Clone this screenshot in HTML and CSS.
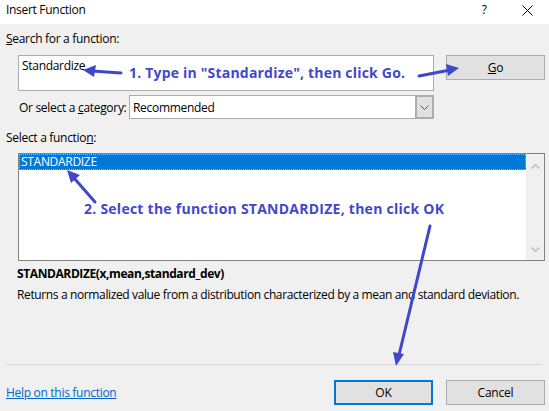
FILE: index.html
```html
<!DOCTYPE html>
<html>
<head>
<meta charset="utf-8">
<link rel="stylesheet" href="styles.css">
</head>
<body>
<div class="dialog">
  <div class="titlebar">
    <span class="title">Insert Function</span>
    <span class="help-q">?</span>
    <svg class="close-x" width="11" height="11" viewBox="0 0 11 11"><path d="M0.5 0.5 L10.5 10.5 M10.5 0.5 L0.5 10.5" stroke="#000" stroke-width="1"/></svg>
  </div>
  <div class="body">
    <div class="label lbl-search"><u>S</u>earch for a function:</div>
    <div class="search-row">
      <div class="search-box">Standardize</div>
      <div class="btn btn-go"><u>G</u>o</div>
    </div>
    <div class="cat-row">
      <span class="cat-label">Or select a <u>c</u>ategory:</span>
      <div class="select">
        <span class="select-text">Recommended</span>
        <span class="select-btn"><svg width="9" height="5" viewBox="0 0 9 5"><path d="M0.5 0.5 L4.5 4.5 L8.5 0.5" fill="none" stroke="#555" stroke-width="1"/></svg></span>
      </div>
    </div>
    <div class="label lbl-select">Select a functio<u>n</u>:</div>
    <div class="listbox">
      <div class="list-items">
        <div class="item selected">STANDARDIZE</div>
      </div>
      <div class="scrollbar">
        <svg width="9" height="5" viewBox="0 0 9 5"><path d="M0.5 4.5 L4.5 0.8 L8.5 4.5" fill="none" stroke="#c2c2c2" stroke-width="1.6"/></svg>
        <svg width="9" height="5" viewBox="0 0 9 5"><path d="M0.5 0.5 L4.5 4.2 L8.5 0.5" fill="none" stroke="#c2c2c2" stroke-width="1.6"/></svg>
      </div>
    </div>
    <div class="signature">STANDARDIZE(x,mean,standard_dev)</div>
    <div class="desc">Returns a normalized value from a distribution characterized by a mean and standard deviation.</div>
    <div class="footer">
      <a class="help-link">Help on this function</a>
      <div class="buttons">
        <div class="btn btn-ok">OK</div>
        <div class="btn btn-cancel">Cancel</div>
      </div>
    </div>
  </div>

  <span class="note note1">1. Type in "Standardize", then click Go.</span>
  <span class="note note2">2. Select the function STANDARDIZE, then click OK</span>
  <svg class="arrows" width="549" height="411" viewBox="0 0 549 411">
    <g stroke="#3f48cc" stroke-width="3" stroke-linecap="round" fill="none">
      <line x1="121" y1="73" x2="92" y2="71"/>
      <line x1="419" y1="76" x2="450" y2="70"/>
      <line x1="95" y1="202" x2="74" y2="178"/>
      <line x1="430" y1="226" x2="399" y2="355"/>
    </g>
    <g fill="#3f48cc">
      <polygon points="83,70 96,65 94,77"/>
      <polygon points="459,68 448,76 446,64"/>
      <polygon points="67,170 80,175 71,183"/>
      <polygon points="396,366 404,354 393,352"/>
    </g>
  </svg>
</div>
</body>
</html>
```
FILE: styles.css
```css
html, body {
  margin: 0;
  padding: 0;
}
body {
  width: 549px;
  height: 411px;
  overflow: hidden;
  background: #f0f0f0;
  font-family: "Open Sans", "Noto Sans", sans-serif;
  font-size: 12px;
  color: #000;
}
.dialog {
  position: relative;
  width: 549px;
  height: 411px;
  display: flex;
  flex-direction: column;
}
.titlebar {
  height: 24px;
  background: #fff;
  display: flex;
  align-items: flex-start;
  padding: 2px 0 0 6px;
  box-sizing: border-box;
  line-height: 16px;
}
.title {
  flex: 1;
  letter-spacing: -0.3px;
}
.help-q {
  margin-right: 35px;
  font-size: 12px;
}
.close-x {
  margin: 3px 16px 0 0;
}
.body {
  flex: 1;
  display: flex;
  flex-direction: column;
}
.label {
  padding-left: 6px;
  line-height: 14px;
  letter-spacing: -0.3px;
}
.lbl-search {
  margin-top: 8px;
}
.search-row {
  display: flex;
  align-items: flex-start;
  margin-top: 9px;
  padding-left: 18px;
}
.search-box {
  width: 416px;
  height: 36px;
  box-sizing: border-box;
  background: #fff;
  border: 1px solid #acacac;
  padding: 2px 3px;
  line-height: 16px;
  letter-spacing: -0.3px;
}
.btn {
  height: 25px;
  box-sizing: border-box;
  width: 99px;
  background: #e1e1e1;
  border: 1px solid #adadad;
  display: flex;
  align-items: center;
  justify-content: center;
  letter-spacing: -0.2px;
}
.btn-go {
  margin-left: 12px;
}
.cat-row {
  display: flex;
  align-items: center;
  margin-top: 4px;
  padding-left: 19px;
}
.cat-label {
  width: 110px;
  letter-spacing: -0.3px;
}
.select {
  width: 305px;
  height: 24px;
  box-sizing: border-box;
  background: #fff;
  border: 1px solid #acacac;
  display: flex;
  align-items: center;
}
.select-text {
  flex: 1;
  padding-left: 3px;
  letter-spacing: -0.3px;
}
.select-btn {
  width: 19px;
  height: 24px;
  margin-right: -1px;
  box-sizing: border-box;
  background: #e1e1e1;
  border: 2px solid #adadad;
  display: flex;
  align-items: center;
  justify-content: center;
}
.lbl-select {
  margin-top: 12px;
}
.listbox {
  margin: 8px 0 0 18px;
  width: 527px;
  height: 108px;
  box-sizing: border-box;
  border: 1px solid #828282;
  background: #fff;
  display: flex;
}
.list-items {
  flex: 1;
}
.item {
  height: 16px;
  line-height: 15px;
  padding-left: 2px;
  letter-spacing: -0.3px;
}
.item.selected {
  background: #0078d7;
  color: #fff;
  box-sizing: border-box;
  outline: 1px dotted #ff9f3a;
  outline-offset: -1px;
}
.scrollbar {
  width: 18px;
  background: #f0f0f0;
  display: flex;
  flex-direction: column;
  justify-content: space-between;
  align-items: center;
  padding: 10px 0 8px;
  box-sizing: border-box;
}
.signature {
  margin: 6px 0 0 17px;
  font-weight: bold;
  line-height: 14px;
  letter-spacing: -0.4px;
}
.desc {
  margin: 7px 0 0 17px;
  line-height: 14px;
  letter-spacing: -0.37px;
}
.footer {
  margin-top: auto;
  margin-left: 6px;
  margin-right: 6px;
  border-top: 1px solid #dadada;
  padding: 15px 0 6px;
  display: flex;
  align-items: center;
  justify-content: space-between;
}
.help-link {
  color: #0066cc;
  text-decoration: underline;
  letter-spacing: -0.3px;
}
.buttons {
  display: flex;
  gap: 13px;
  margin-right: -2px;
}
.btn-ok {
  border: 2px solid #0078d7;
}
.note {
  position: absolute;
  color: #3f48cc;
  font-weight: bold;
  font-size: 14px;
  line-height: 18px;
  white-space: nowrap;
}
.note1 {
  left: 129px;
  top: 64px;
  letter-spacing: 0.2px;
}
.note2 {
  left: 84px;
  top: 200px;
  letter-spacing: 0.25px;
}
.arrows {
  position: absolute;
  left: 0;
  top: 0;
  pointer-events: none;
}
```
